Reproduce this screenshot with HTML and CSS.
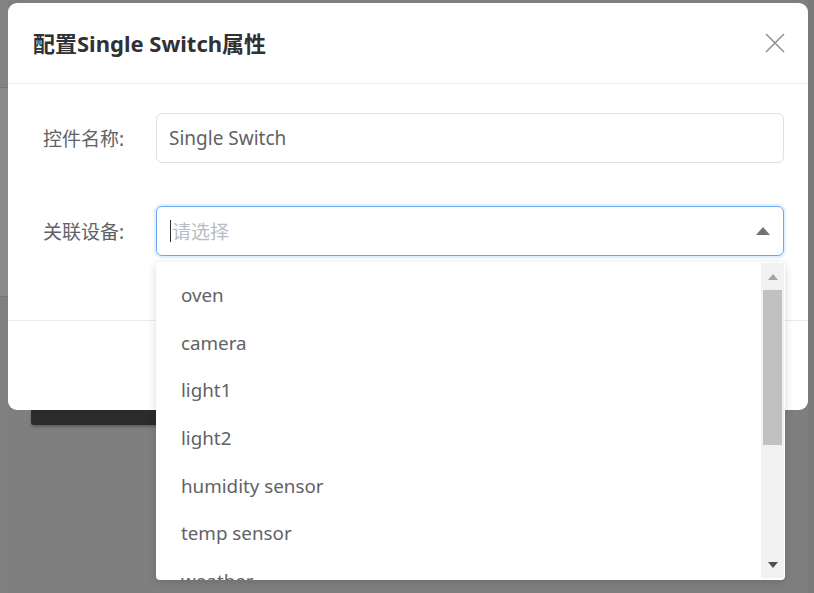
FILE: index.html
```html
<!DOCTYPE html>
<html lang="zh">
<head>
<meta charset="utf-8">
<title>配置Single Switch属性</title>
<link rel="stylesheet" href="styles.css">
</head>
<body>
<div class="page">
  <div class="side">
    <div class="band band-a"></div>
    <div class="band band-b"></div>
    <div class="band band-c"></div>
  </div>
  <div class="page-main">
    <div class="dark-bar"></div>
  </div>
  <div class="side-right"></div>
</div>

<div class="dialog">
  <div class="dialog-header">
    <span class="dialog-title">配置Single Switch属性</span>
    <svg class="close" width="20" height="20" viewBox="0 0 20 20"><path d="M1 1 L19 19 M19 1 L1 19" stroke="#909399" stroke-width="1.6" fill="none"/></svg>
  </div>
  <div class="dialog-body">
    <div class="form-row">
      <label class="form-label">控件名称:</label>
      <div class="input">Single Switch</div>
    </div>
    <div class="form-row row-2">
      <label class="form-label">关联设备:</label>
      <div class="input input-focus">
        <span class="caret"></span><span class="placeholder">请选择</span>
        <span class="arrow-up"></span>
      </div>
    </div>
  </div>
  <div class="dialog-footer"></div>
</div>

<div class="dropdown">
  <ul class="options">
    <li>oven</li>
    <li>camera</li>
    <li>light1</li>
    <li>light2</li>
    <li>humidity sensor</li>
    <li>temp sensor</li>
    <li>weather</li>
  </ul>
  <div class="scrollbar">
    <div class="sb-btn"><span class="sb-up"></span></div>
    <div class="sb-track"><div class="sb-thumb"></div></div>
    <div class="sb-btn"><span class="sb-down"></span></div>
  </div>
</div>
</body>
</html>
```
FILE: styles.css
```css
html, body {
  margin: 0;
  padding: 0;
  width: 814px;
  height: 593px;
  overflow: hidden;
  background: #7f7f7f;
  font-family: "Noto Sans", "Noto Sans CJK SC", sans-serif;
}

.page {
  display: flex;
  height: 593px;
}
.side {
  width: 8px;
  display: flex;
  flex-direction: column;
}
.band-a { height: 87px; background: #848484; border-bottom: 1px solid #777; }
.band-b { height: 208px; background: #8a8a8a; border-bottom: 1px solid #777; }
.band-c { flex: 1; background: #808080; }
.page-main {
  flex: 1;
  padding-top: 410px;
  padding-left: 23px;
}
.dark-bar {
  width: 200px;
  height: 15px;
  background: #2b2b2b;
  border-radius: 0 0 3px 3px;
  box-shadow: 0 2px 3px rgba(0,0,0,0.25);
}
.side-right {
  width: 6px;
  background: #7a7a7a;
}

.dialog {
  position: absolute;
  left: 8px;
  top: 3px;
  width: 800px;
  height: 407px;
  background: #fff;
  border-radius: 9px;
  display: flex;
  flex-direction: column;
}
.dialog-header {
  height: 80px;
  border-bottom: 1px solid #e9eaec;
  display: flex;
  align-items: center;
  justify-content: space-between;
  padding: 0 23px 0 25px;
}
.dialog-title {
  font-size: 22px;
  font-weight: 700;
  color: #303133;
  margin-top: -2px;
}
.close { margin-top: 0; }

.dialog-body {
  height: 237px;
  border-bottom: 1px solid #e9eaec;
  padding: 29px 24px 0 35px;
  box-sizing: border-box;
}
.form-row {
  display: flex;
  align-items: center;
}
.row-2 { margin-top: 43px; }
.form-label {
  width: 113px;
  font-size: 19px;
  color: #606266;
}
.input {
  flex: 1;
  height: 50px;
  box-sizing: border-box;
  border: 1px solid #dcdfe6;
  border-radius: 6px;
  padding: 0 12px;
  display: flex;
  align-items: center;
  font-size: 19px;
  color: #606266;
  position: relative;
}
.input-focus {
  border-color: #6aa9f2;
  box-shadow: 0 0 0 2px rgba(64,158,255,0.15);
}
.caret {
  width: 1px;
  height: 22px;
  background: #303133;
  margin-right: 1px;
  margin-left: 1px;
}
.placeholder { color: #b9bcc3; }
.arrow-up {
  margin-left: auto;
  margin-right: 1px;
  width: 0;
  height: 0;
  border-left: 7px solid transparent;
  border-right: 7px solid transparent;
  border-bottom: 8px solid #707378;
}
.dialog-footer { flex: 1; }

.dropdown {
  position: absolute;
  left: 156px;
  top: 262px;
  width: 629px;
  height: 318px;
  background: #fff;
  border-radius: 4px;
  box-shadow: 0 2px 10px rgba(0,0,0,0.15);
  display: flex;
  overflow: hidden;
}
.options {
  list-style: none;
  margin: 0;
  padding: 10px 0 0 0;
  flex: 1;
}
.options li {
  height: 47.7px;
  line-height: 47.7px;
  padding-left: 25px;
  font-size: 18.8px;
  color: #606266;
}
.scrollbar {
  width: 23px;
  margin: 1px 1px 2px 0;
  background: #f1f1f1;
  display: flex;
  flex-direction: column;
}
.sb-btn {
  height: 27px;
  display: flex;
  align-items: center;
  justify-content: center;
}
.sb-up {
  width: 0; height: 0;
  border-left: 5px solid transparent;
  border-right: 5px solid transparent;
  border-bottom: 6px solid #a3a3a3;
}
.sb-down {
  width: 0; height: 0;
  border-left: 5px solid transparent;
  border-right: 5px solid transparent;
  border-top: 6px solid #505050;
}
.sb-track {
  flex: 1;
  padding: 0 2px;
}
.sb-thumb {
  height: 155px;
  background: #c1c1c1;
}
```
